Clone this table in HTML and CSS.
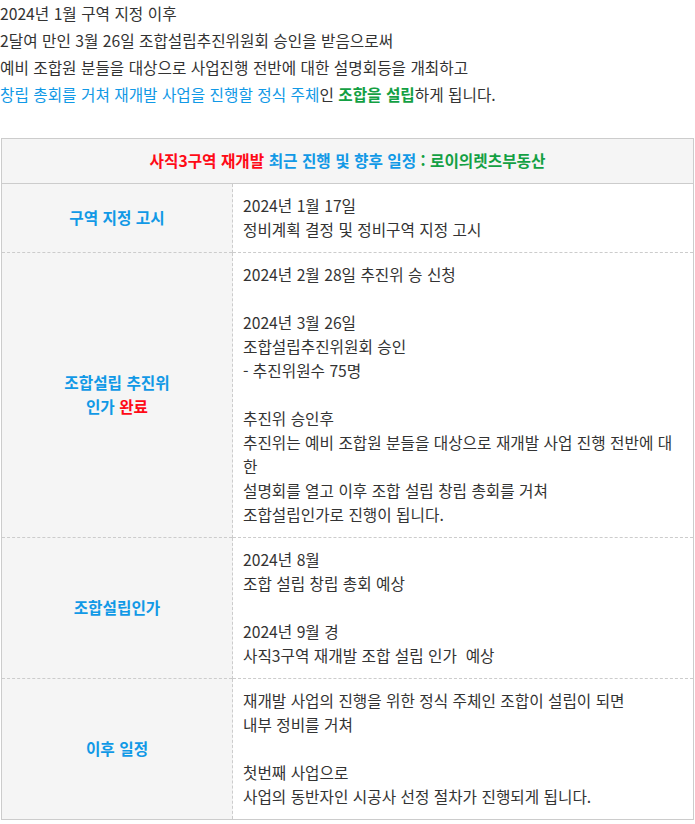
FILE: index.html
```html
<!DOCTYPE html>
<html lang="ko">
<head>
    <meta charset="UTF-8">
    <meta name="viewport" content="width=device-width, initial-scale=1.0">
    <title>사직3구역 재개발 일정</title>
    <link rel="stylesheet" href="styles.css">
</head>
<body>
    <div class="intro">
        <p>2024년 1월 구역 지정 이후</p>
        <p>2달여 만인 3월 26일 조합설립추진위원회 승인을 받음으로써</p>
        <p>예비 조합원 분들을 대상으로 사업진행 전반에 대한 설명회등을 개최하고</p>
        <p><span class="blue">창립 총회를 거쳐 재개발 사업을 진행할 정식 주체</span>인 <strong class="green">조합을 설립</strong>하게 됩니다.</p>
    </div>

    <table class="schedule">
        <colgroup>
            <col class="col-label">
            <col>
        </colgroup>
        <thead>
            <tr>
                <th colspan="2">
                    <span class="red">사직3구역 재개발</span>
                    <span class="blue">최근 진행 및 향후 일정</span>
                    <span class="green">: 로이의렛츠부동산</span>
                </th>
            </tr>
        </thead>
        <tbody>
            <tr>
                <td class="label">구역 지정 고시</td>
                <td class="desc">2024년 1월 17일<br>정비계획 결정 및 정비구역 지정 고시</td>
            </tr>
            <tr>
                <td class="label">조합설립 추진위<br>인가 <span class="red">완료</span></td>
                <td class="desc">2024년 2월 28일 추진위 승 신청<br><br>2024년 3월 26일<br>조합설립추진위원회 승인<br>- 추진위원수 75명<br><br>추진위 승인후<br>추진위는 예비 조합원 분들을 대상으로 재개발 사업 진행 전반에 대한<br>설명회를 열고 이후 조합 설립 창립 총회를 거쳐<br>조합설립인가로 진행이 됩니다.</td>
            </tr>
            <tr>
                <td class="label">조합설립인가</td>
                <td class="desc">2024년 8월<br>조합 설립 창립 총회 예상<br><br>2024년 9월 경<br>사직3구역 재개발 조합 설립 인가&nbsp; 예상</td>
            </tr>
            <tr>
                <td class="label">이후 일정</td>
                <td class="desc">재개발 사업의 진행을 위한 정식 주체인 조합이 설립이 되면<br>내부 정비를 거쳐<br><br>첫번째 사업으로<br>사업의 동반자인 시공사 선정 절차가 진행되게 됩니다.</td>
            </tr>
        </tbody>
    </table>
</body>
</html>
```

FILE: styles.css
```css
body {
    margin: 0;
    font-family: "Noto Sans CJK KR", "Noto Sans", sans-serif;
    font-size: 15.7px;
    color: #333;
    background-color: #fff;
}

.intro {
    margin-bottom: 30px;
}

.intro p {
    margin: 0;
    line-height: 27px;
}

.blue {
    color: #1199e6;
}

.green {
    color: #13a043;
}

.red {
    color: #ff0a16;
}

.intro strong {
    font-weight: 700;
}

.schedule {
    width: calc(100% - 2px);
    margin-left: 1px;
    border-collapse: collapse;
    border: 1px solid #ccc;
    table-layout: fixed;
}

.col-label {
    width: 231px;
}

.schedule th {
    background-color: #f5f5f5;
    padding: 10px;
    line-height: 24px;
    font-weight: 700;
    border-bottom: 1px solid #ccc;
    text-align: center;
}

.schedule td {
    padding: 10px;
    line-height: 24px;
    border-top: 1px dashed #ccc;
    vertical-align: middle;
}

.schedule tbody tr:first-child td {
    border-top: none;
}

.label {
    background-color: #f5f5f5;
    color: #1199e6;
    font-weight: 700;
    text-align: center;
    border-right: 1px dashed #ccc;
}

.desc {
    text-align: left;
    padding-right: 12px;
    word-break: break-all;
}
```
